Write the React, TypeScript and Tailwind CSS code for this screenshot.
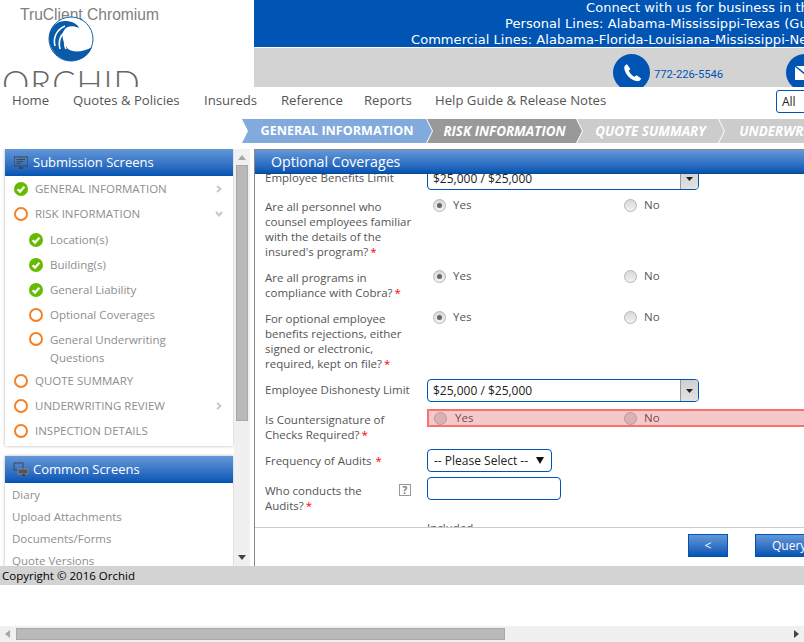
import React from "react";

const ui = { fontFamily: '"Open Sans", "Noto Sans", sans-serif' };

function Check({ className = "" }: { className?: string }) {
  return (
    <svg width="14" height="14" viewBox="0 0 14 14" className={"shrink-0 " + className}>
      <circle cx="7" cy="7" r="7" fill="#66bb00" />
      <path d="M3.6 7.2 L6 9.6 L10.4 4.8" fill="none" stroke="#fff" strokeWidth="2.2" />
    </svg>
  );
}
function Ring({ className = "" }: { className?: string }) {
  return <span className={"block w-[14px] h-[14px] rounded-full border-2 border-[#f58025] bg-white shrink-0 " + className} />;
}
function Chev({ down }: { down?: boolean }) {
  return (
    <svg width="8" height="8" viewBox="0 0 8 8" className="shrink-0">
      {down ? (
        <path d="M1 2 L4 5.5 L7 2" fill="none" stroke="#c8c8c8" strokeWidth="2" />
      ) : (
        <path d="M2 1 L5.5 4 L2 7" fill="none" stroke="#c8c8c8" strokeWidth="2" />
      )}
    </svg>
  );
}
function SideItem({ icon, label, sub, chev }: { icon: "c" | "r"; label: React.ReactNode; sub?: boolean; chev?: "r" | "d" }) {
  return (
    <div className={"flex items-center h-[25px] text-[11.5px] leading-[18px] text-[#8e8e8e] " + (sub ? "pl-[24px]" : "pl-[9px]")}>
      {icon === "c" ? <Check /> : <Ring />}
      <span className="ml-[7px] flex-1">{label}</span>
      {chev && <span className="mr-[10px] flex"><Chev down={chev === "d"} /></span>}
    </div>
  );
}
function PanelHead({ title, icon }: { title: string; icon: React.ReactNode }) {
  return (
    <div className="h-[27px] flex items-center bg-gradient-to-b from-[#6398d8] to-[#0054b4] text-white text-[13px] pl-[9px] gap-[5px]">
      {icon}
      <span>{title}</span>
    </div>
  );
}
function Radio({ on }: { on?: boolean }) {
  return (
    <span className="w-[13px] h-[13px] rounded-full border border-[#b5b5b5] bg-gradient-to-b from-[#d8d8d8] to-[#f2f2f2] flex items-center justify-center shrink-0">
      {on && <span className="w-[5px] h-[5px] rounded-full bg-[#666]" />}
    </span>
  );
}
function YesNo({ yes }: { yes?: boolean }) {
  return (
    <div className="flex text-[11.5px] leading-[15px] text-[#555] pt-[1px]">
      <span className="flex items-start w-[197px] pl-[6px] gap-[7px]"><Radio on={yes} /><span className="-mt-[2px]">Yes</span></span>
      <span className="flex items-start gap-[7px]"><Radio /><span className="-mt-[2px]">No</span></span>
    </div>
  );
}
function YesNoErr() {
  return (
    <div className="flex text-[11.5px] leading-[15px] text-[#7a4a4a]">
      <span className="flex items-start w-[195px] pl-[5px] gap-[8px]"><span className="mt-[1px] flex"><span className="w-[13px] h-[13px] rounded-full border border-[#b89a9a] bg-[#d9b2b5] block" /></span><span className="-mt-[1px]">Yes</span></span>
      <span className="flex items-start gap-[7px]"><span className="mt-[1px] flex"><span className="w-[13px] h-[13px] rounded-full border border-[#b89a9a] bg-[#d9b2b5] block" /></span><span className="-mt-[1px]">No</span></span>
    </div>
  );
}
function Label({ children, req, pt = 1, gap }: { children: React.ReactNode; req?: boolean; pt?: number; gap?: boolean }) {
  return (
    <div className="w-[162px] shrink-0 pl-[10px] text-[11.5px] leading-[15px] text-[#555] whitespace-nowrap" style={{ paddingTop: pt }}>
      {children}
      {req && <span className={"text-[#f00] " + (gap ? "ml-[4px]" : "ml-[2px]")}>*</span>}
    </div>
  );
}
function LimitSelect() {
  return (
    <div className="w-[272px] h-[23px] rounded-[4px] border border-[#0054b4] flex items-center justify-between pl-[5px] text-[12px] text-[#222] bg-white overflow-hidden">
      <span>$25,000 / $25,000</span>
      <span className="w-[18px] h-[21px] bg-gradient-to-b from-[#d0d0d0] to-[#e2e2e2] flex items-center justify-center border-l border-[#999]">
        <svg width="7" height="4" viewBox="0 0 7 4"><path d="M0 0 H7 L3.5 4 Z" fill="#222" /></svg>
      </span>
    </div>
  );
}
function Step({ label, bg, first, w }: { label: string; bg: string; first?: boolean; w: string }) {
  return (
    <div
      className={"h-[24px] pt-[1px] flex items-center justify-center font-bold italic -mr-[5px] text-white [clip-path:polygon(0_0,calc(100%-6px)_0,100%_50%,calc(100%-6px)_100%,0_100%,6px_50%)] " + bg + " " + w}
    >
      <span className={first ? "not-italic text-[12.6px]" : "text-[13.4px]"}>{label}</span>
    </div>
  );
}

export default function App() {
  return (
    <div className="w-[804px] h-[642px] overflow-hidden bg-white flex flex-col" style={ui}>
      {/* header */}
      <div className="h-[87px] flex shrink-0 w-[1100px]">
        <div className="w-[254px] relative overflow-hidden shrink-0">
          <div className="pl-[20px] pt-[6px] text-[15.6px] leading-[18px] text-[#808080]" style={{ fontFamily: '"Liberation Sans", sans-serif' }}>TruClient Chromium</div>
          <svg width="46" height="46" viewBox="0 0 46 46" className="absolute left-[48px] top-[16px]">
            <circle cx="23" cy="23" r="22" fill="#fff" stroke="#0c64b4" strokeWidth="1" />
            <path d="M1 21 C2 10 10 4 19 5 C26 6 30 9 31 12 C25 9 19 10 17 13 C13 17 14 26 20 33 C25 37 36 36 44 31 C41 40 32 45 23 45 C11 45 1 34 1 21 Z" fill="#0a5aa8" />
            <path d="M7 30 C5 22 8 14 17 10 M12 33 C10 25 12 18 21 13 M18 33 C15 27 17 20 25 16" fill="none" stroke="#fff" strokeWidth="1.6" />
          </svg>
          <div className="absolute left-[2px] top-[61px] text-[34.5px] leading-[44px] tracking-[1px] text-[#666] font-light whitespace-nowrap" style={{ fontFamily: 'Lato, sans-serif' }}>ORCHID</div>
        </div>
        <div className="flex-1 flex flex-col">
          <div className="h-[47px] bg-[#0054b4] text-white text-[13px] leading-[16px] tracking-[0.06px] whitespace-nowrap" style={{ fontFamily: '"DejaVu Sans", sans-serif' }}>
            <div className="pl-[332px]">Connect with us for business in the following states:</div>
            <div className="pl-[251px]">Personal Lines: Alabama-Mississippi-Texas (Gulf Coast Only)</div>
            <div className="pl-[157px]">Commercial Lines: Alabama-Florida-Louisiana-Mississippi-New Orleans-Texas</div>
          </div>
          <div className="mt-[1px] h-[39px] bg-[#d3d3d3] overflow-hidden flex items-start pl-[359px] pt-[6px]">
            <span className="w-[37px] h-[37px] rounded-full bg-[#0054b4] flex items-center justify-center shrink-0">
              <svg width="22" height="22" viewBox="0 0 24 24"><path d="M6.6 2.5 C5 3 3.5 4.5 3.5 6.5 C4 13 11 20.5 18 21 C20 21 21.5 19.5 22 18 L17 14.5 L14.8 16.2 C12 15 9.5 12 8.5 9.5 L10.2 7.5 Z" fill="#fff" /></svg>
            </span>
            <span className="ml-[4px] mt-[14px] text-[11.2px] leading-[14px] text-[#0054b4] w-[132px]" style={{ fontFamily: 'Roboto, sans-serif' }}>772-226-5546</span>
            <span className="w-[37px] h-[37px] rounded-full bg-[#0054b4] flex items-center justify-center shrink-0">
              <svg width="22" height="16" viewBox="0 0 22 16"><path d="M1 1 H21 V15 H1 Z" fill="#fff" /><path d="M1 1 L11 9 L21 1" fill="none" stroke="#0054b4" strokeWidth="1.5" /></svg>
            </span>
          </div>
        </div>
      </div>
      {/* nav */}
      <div className="h-[32px] flex items-center w-[1100px] shrink-0 text-[#555] text-[13.15px] pl-[12px] pb-[5px]">
        <span className="w-[61px]">Home</span>
        <span className="w-[131px]">Quotes &amp; Policies</span>
        <span className="w-[77px]">Insureds</span>
        <span className="w-[83px]">Reference</span>
        <span className="w-[71px]">Reports</span>
        <span className="w-[341px]">Help Guide &amp; Release Notes</span>
        <span className="self-start mt-[3px] w-[80px] h-[23px] border border-[#0054b4] rounded-[3px] flex items-center pl-[5px] text-[12px] text-[#222]">All</span>
      </div>
      {/* wizard */}
      <div className="h-[24px] flex w-[1100px] shrink-0 pl-[242px]">
        <Step label="GENERAL INFORMATION" bg="bg-[#82aadc]" first w="w-[190px]" />
        <Step label="RISK INFORMATION" bg="bg-[#999999]" w="w-[155px]" />
        <Step label="QUOTE SUMMARY" bg="bg-[#cccccc]" w="w-[147px]" />
        <Step label="UNDERWRITING REVIEW" bg="bg-[#cccccc]" w="w-[190px]" />
      </div>
      {/* main */}
      <div className="mt-[6px] h-[417px] flex shrink-0 w-[1100px]">
        <div className="w-[234px] shrink-0 overflow-hidden pl-[5px] pr-[1px] bg-white">
          <div className="shadow-[0_0_3px_rgba(0,0,0,0.3)] bg-white">
            <PanelHead
              title="Submission Screens"
              icon={<svg width="14" height="14" viewBox="0 0 14 14"><path d="M0 1 H14 V10 H0 Z" fill="none" stroke="#444" strokeWidth="1.2" /><path d="M2.5 3.5 H11 M2.5 5.5 H9 M2.5 7.5 H7" stroke="#444" /><path d="M5 11 H9 V13 H5 Z" fill="#444" /></svg>}
            />
            <div className="pb-[3px]">
              <SideItem icon="c" label="GENERAL INFORMATION" chev="r" />
              <SideItem icon="r" label="RISK INFORMATION" chev="d" />
              <div className="pt-[1px]">
                <SideItem icon="c" sub label="Location(s)" />
              </div>
              <SideItem icon="c" sub label="Building(s)" />
              <SideItem icon="c" sub label="General Liability" />
              <SideItem icon="r" sub label="Optional Coverages" />
              <div className="flex text-[11.5px] leading-[18px] text-[#8e8e8e] pl-[24px] pt-[4px] h-[41px]">
                <Ring className="mt-[1px]" />
                <span className="ml-[7px]">General Underwriting<br />Questions</span>
              </div>
              <SideItem icon="r" label="QUOTE SUMMARY" />
              <SideItem icon="r" label="UNDERWRITING REVIEW" chev="r" />
              <SideItem icon="r" label="INSPECTION DETAILS" />
            </div>
          </div>
          <div className="mt-[10px] shadow-[0_0_3px_rgba(0,0,0,0.3)] bg-white h-[200px]">
            <PanelHead
              title="Common Screens"
              icon={<svg width="16" height="16" viewBox="0 0 16 16" className="-ml-[1px] -mr-[1px]"><path d="M1 1 H10 V8 H1 Z" fill="none" stroke="#444" /><path d="M5 7 H15 V12 H5 Z" fill="#555" stroke="#888" /><path d="M9 12 H12 V14 H9 Z" fill="#444" /></svg>}
            />
            <div className="pl-[7px] pt-[1px] text-[11.5px] leading-[22px] text-[#8e8e8e]">
              <div>Diary</div>
              <div>Upload Attachments</div>
              <div>Documents/Forms</div>
              <div>Quote Versions</div>
            </div>
          </div>
        </div>
        {/* sidebar scrollbar */}
        <div className="w-[16px] shrink-0 bg-[#f0f0f0] flex flex-col items-center">
          <svg width="8" height="5" viewBox="0 0 8 5" className="mt-[6px]"><path d="M0 5 L4 0 L8 5 Z" fill="#a6a6a6" /></svg>
          <div className="mt-[5px] w-[12px] h-[256px] bg-[#b9b9b9] border border-[#a8a8a8]" />
          <svg width="8" height="5" viewBox="0 0 8 5" className="mt-[134px]"><path d="M0 0 L8 0 L4 5 Z" fill="#444" /></svg>
        </div>
        <div className="w-[4px] shrink-0" />
        {/* form */}
        <div className="flex-1 border-l border-t border-[#888] flex flex-col min-w-0">
          <div className="h-[24px] shrink-0 bg-gradient-to-b from-[#6398d8] to-[#0054b4] text-white text-[14.2px] leading-[23px] pl-[16px] border-b border-[#134a85]">Optional Coverages</div>
          <div className="h-[353px] overflow-hidden shrink-0">
            <div className="-mt-[7px]">
              <div className="flex h-[31px]">
                <Label pt={3}>Employee Benefits Limit</Label>
                <div className="pl-[10px]"><LimitSelect /></div>
              </div>
              <div className="flex h-[71px]">
                <Label req>Are all personnel who<br />counsel employees familiar<br />with the details of the<br />insured's program?</Label>
                <div className="pl-[10px] flex-1"><YesNo yes /></div>
              </div>
              <div className="flex h-[41px]">
                <Label req>Are all programs in<br />compliance with Cobra?</Label>
                <div className="pl-[10px] flex-1"><YesNo yes /></div>
              </div>
              <div className="flex h-[69px]">
                <Label req>For optional employee<br />benefits rejections, either<br />signed or electronic,<br />required, kept on file?</Label>
                <div className="pl-[10px] flex-1"><YesNo yes /></div>
              </div>
              <div className="flex h-[30px]">
                <Label pt={3}>Employee Dishonesty Limit</Label>
                <div className="pl-[10px]"><LimitSelect /></div>
              </div>
              <div className="flex h-[40px]">
                <Label pt={3} req>Is Countersignature of<br />Checks Required?</Label>
                <div className="ml-[10px] flex-1 h-[18px] bg-[#f5c9c9] border-2 border-[#fb7070]">
                  <YesNoErr />
                </div>
              </div>
              <div className="flex h-[28px]">
                <Label pt={4} req gap>Frequency of Audits</Label>
                <div className="pl-[10px]">
                  <div className="w-[125px] h-[23px] rounded-[4px] border border-[#0054b4] flex items-center justify-between pl-[6px] pr-[7px] text-[12px] text-[#222]">
                    <span>-- Please Select --</span>
                    <svg width="8" height="7" viewBox="0 0 8 7"><path d="M0 0 H8 L4 7 Z" fill="#111" /></svg>
                  </div>
                </div>
              </div>
              <div className="flex h-[43px]">
                <div className="w-[162px] shrink-0 flex pl-[10px]">
                  <div className="flex-1 pt-[6px] text-[11.5px] leading-[15px] text-[#555]">Who conducts the<br />Audits?<span className="text-[#f00] ml-[2px]">*</span></div>
                  <span className="mt-[7px] mr-[6px] w-[12px] h-[12px] border border-[#999] flex items-center justify-center text-[10px] leading-[10px] font-bold text-[#777]">?</span>
                </div>
                <div className="pl-[10px]"><div className="w-[134px] h-[23px] rounded-[4px] border border-[#0054b4]" /></div>
              </div>
              <div className="flex">
                <div className="w-[162px] shrink-0" />
                <div className="pl-[10px] text-[11.5px] leading-[15px] text-[#555]">Included</div>
              </div>
            </div>
          </div>
          <div className="flex-1 border-t border-[#cccccc] flex items-start pl-[433px] pt-[6px] gap-[27px]">
            <button className="w-[40px] h-[23px] bg-gradient-to-b from-[#6398d8] to-[#0054b4] border border-[#0054b4] text-white text-[12px]">&lt;</button>
            <button className="w-[100px] h-[23px] bg-gradient-to-b from-[#6398d8] to-[#0054b4] border border-[#0054b4] text-white text-[12px] text-left pl-[16px]">Query</button>
          </div>
        </div>
      </div>
      {/* footer */}
      <div className="h-[19px] bg-[#d3d3d3] text-[11.5px] leading-[19px] text-black pl-[2px] shrink-0">Copyright © 2016 Orchid</div>
      <div className="h-[41px] shrink-0" />
      {/* page scrollbar */}
      <div className="h-[16px] shrink-0 bg-[#f0f0f0] flex items-center pl-[5px] pr-[5px]">
        <svg width="5" height="8" viewBox="0 0 5 8"><path d="M5 0 V8 L0 4 Z" fill="#a6a6a6" /></svg>
        <div className="ml-[6px] w-[489px] h-[12px] bg-[#b9b9b9] border border-[#a8a8a8]" />
        <svg width="5" height="8" viewBox="0 0 5 8" className="ml-auto"><path d="M0 0 V8 L5 4 Z" fill="#444" /></svg>
      </div>
    </div>
  );
}
